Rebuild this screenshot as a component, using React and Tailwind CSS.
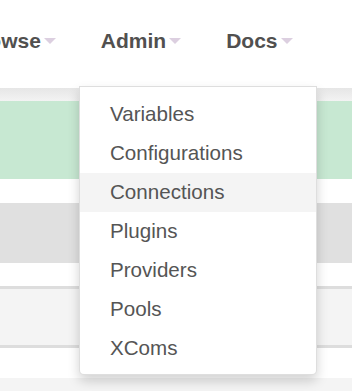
import React from "react";

function Caret() {
  return (
    <svg width="12" height="6" viewBox="0 0 12 6" className="ml-[3px] mt-[2px]">
      <polygon points="0,0 12,0 6,6" fill="#dccfe0" />
    </svg>
  );
}

function NavItem({ label, className }) {
  return (
    <div className={"flex items-center " + (className || "")}>
      <span className="text-[21px] font-bold text-[#51504f] leading-none">{label}</span>
      <Caret />
    </div>
  );
}

const items = ["Variables", "Configurations", "Connections", "Plugins", "Providers", "Pools", "XComs"];

export default function App() {
  return (
    <div
      className="relative w-[352px] h-[391px] overflow-hidden bg-white"
      style={{ fontFamily: '"Liberation Sans", Arial, sans-serif' }}
    >
      <div className="h-[88px] flex items-center pb-[8px] ml-[-35px] gap-[45px]">
        <NavItem label="Browse" />
        <NavItem label="Admin" />
        <NavItem label="Docs" />
      </div>
      <div className="h-[13px] bg-gradient-to-b from-[#e6e6e6] to-[#f3f3f3]" />
      <div className="h-[78px] bg-[#c7e8d2]" />
      <div className="h-[24px] bg-white" />
      <div className="h-[60px] bg-[#e0e0e0]" />
      <div className="h-[23px] bg-white" />
      <div className="h-[3px] bg-[#dddddd]" />
      <div className="h-[56px] bg-[#f4f4f4]" />
      <div className="h-[3px] bg-[#dddddd]" />
      <div className="h-[30px] bg-white" />
      <div className="h-[13px] bg-[#f4f4f4]" />

      <div className="absolute left-[79px] top-[86px] w-[238px] h-[289px] bg-white border border-[rgba(0,0,0,0.13)] rounded-b-[5px] shadow-[0_6px_12px_rgba(0,0,0,0.175)] py-[8px]">
        {items.map((it) => (
          <div
            key={it}
            className={
              "h-[39px] flex items-center pl-[30px] pb-[1px] text-[20.6px] text-[#555555] " +
              (it === "Connections" ? "bg-[#f4f4f4] text-[#3d3d3d]" : "")
            }
          >
            {it}
          </div>
        ))}
      </div>
    </div>
  );
}
